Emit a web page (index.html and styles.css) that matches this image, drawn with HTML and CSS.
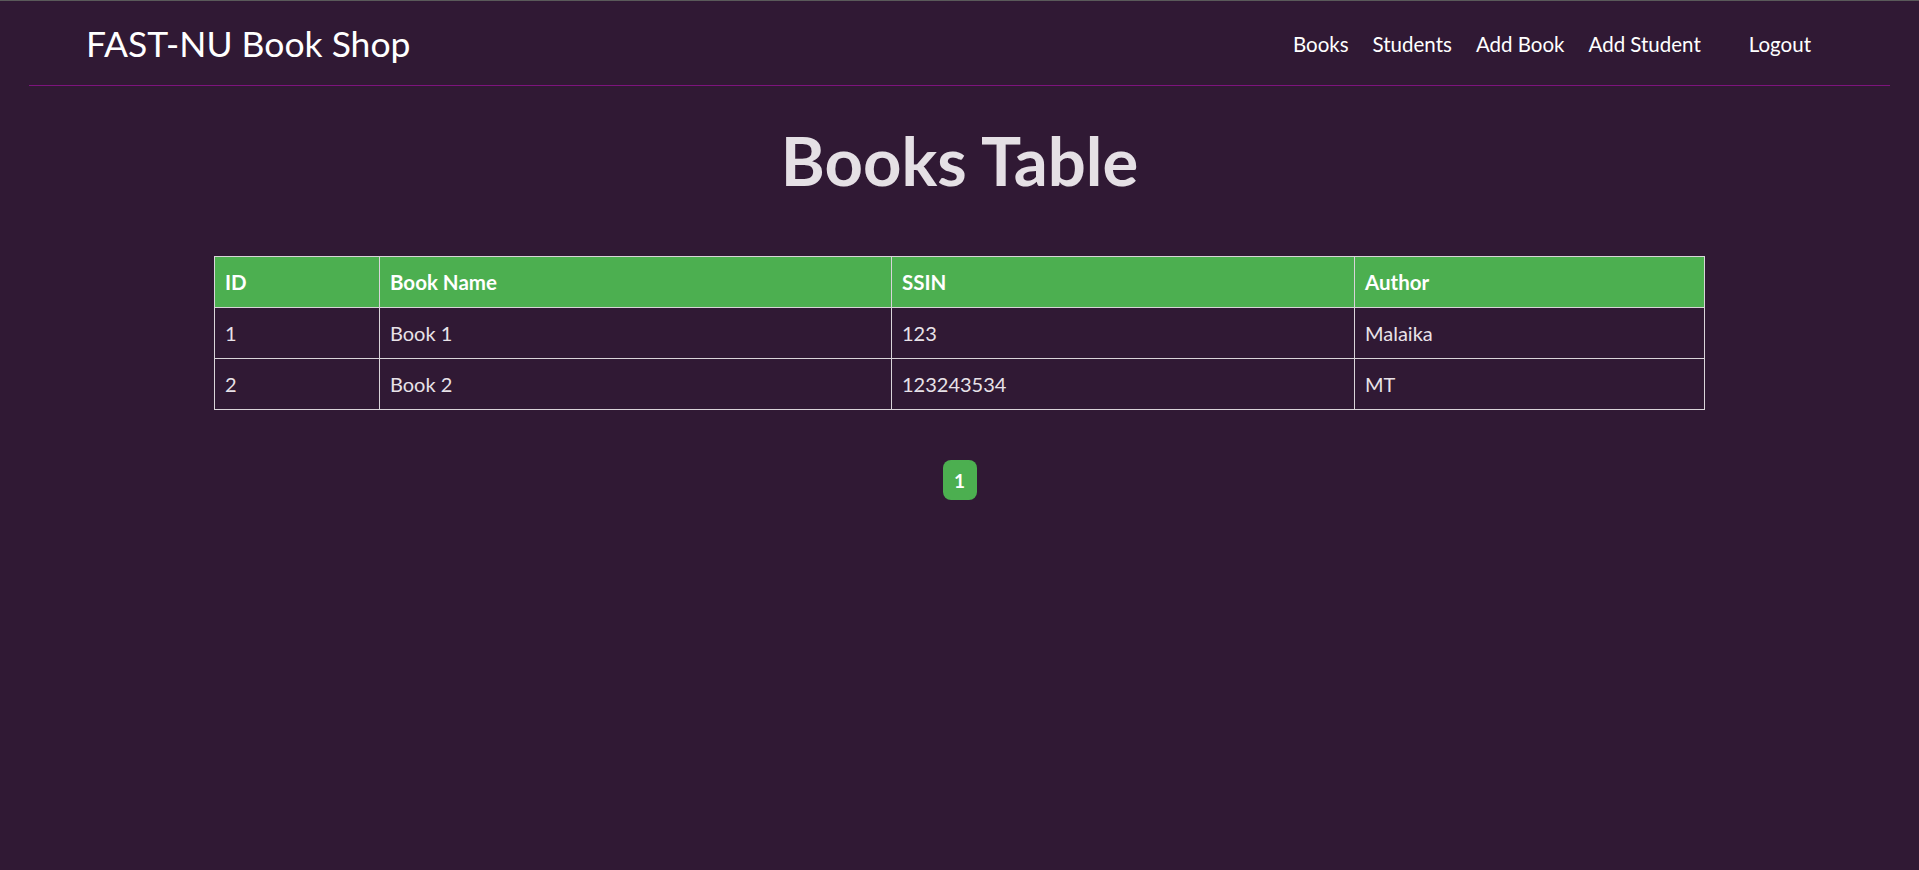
FILE: index.html
```html
<!DOCTYPE html>
<html lang="en">
<head>
<meta charset="utf-8">
<title>FAST-NU Book Shop</title>
<link rel="stylesheet" href="styles.css">
</head>
<body>
<nav class="navbar">
  <a class="brand" href="#">FAST-NU Book Shop</a>
  <ul class="nav-links">
    <li><a href="#">Books</a></li>
    <li><a href="#">Students</a></li>
    <li><a href="#">Add Book</a></li>
    <li><a href="#">Add Student</a></li>
    <li class="logout"><a href="#">Logout</a></li>
  </ul>
</nav>
<main class="content">
  <h1 class="title">Books Table</h1>
  <table class="books">
    <colgroup>
      <col class="c-id">
      <col class="c-name">
      <col class="c-ssin">
      <col class="c-author">
    </colgroup>
    <thead>
      <tr><th>ID</th><th>Book Name</th><th>SSIN</th><th>Author</th></tr>
    </thead>
    <tbody>
      <tr><td>1</td><td>Book 1</td><td>123</td><td>Malaika</td></tr>
      <tr><td>2</td><td>Book 2</td><td>123243534</td><td>MT</td></tr>
    </tbody>
  </table>
  <div class="pagination">
    <a class="page active" href="#">1</a>
  </div>
</main>
</body>
</html>
```
FILE: styles.css
```css
html, body {
  margin: 0;
  padding: 0;
}
body {
  background: #301934;
  border-top: 1px solid #5a5a5a;
  font-family: "Segoe UI", Lato, "Liberation Sans", sans-serif;
  color: #e6e0e6;
  min-height: 869px;
}
a {
  text-decoration: none;
  color: inherit;
}
.navbar {
  margin: 0 29px;
  height: 85px;
  border-bottom: 1px solid #7d137d;
  display: flex;
  align-items: center;
  justify-content: space-between;
  padding: 3px 79px 0 57px;
  box-sizing: border-box;
}
.brand {
  color: #ffffff;
  font-size: 35.5px;
  line-height: 1.2;
}
.nav-links {
  list-style: none;
  margin: 0;
  padding: 0;
  display: flex;
  gap: 24px;
  font-size: 20.5px;
  line-height: 1.2;
  color: #ffffff;
}
.nav-links .logout {
  margin-left: 24px;
}
.content {
  display: flex;
  flex-direction: column;
  align-items: center;
}
.title {
  margin: 34px 0 56px;
  font-size: 67px;
  line-height: 1.2;
  font-weight: 700;
  color: #e5e0e5;
}
.books {
  width: 1490px;
  border-collapse: collapse;
  table-layout: fixed;
  font-size: 20px;
}
.c-id { width: 165px; }
.c-name { width: 512px; }
.c-ssin { width: 463px; }
.c-author { width: 350px; }
.books th,
.books td {
  border: 1px solid #d9d4d9;
  padding: 0 10px;
  height: 50px;
  text-align: left;
  line-height: 1.2;
}
.books th {
  background: #4caf50;
  color: #ffffff;
  font-weight: 700;
  font-size: 20.5px;
}
.books td {
  color: #e8e2e8;
}
.pagination {
  margin-top: 50px;
  display: flex;
  justify-content: center;
}
.page {
  display: flex;
  align-items: center;
  justify-content: center;
  width: 34px;
  height: 40px;
  border-radius: 8px;
  background: #4caf50;
  color: #ffffff;
  font-weight: 700;
  font-size: 19px;
}
```
